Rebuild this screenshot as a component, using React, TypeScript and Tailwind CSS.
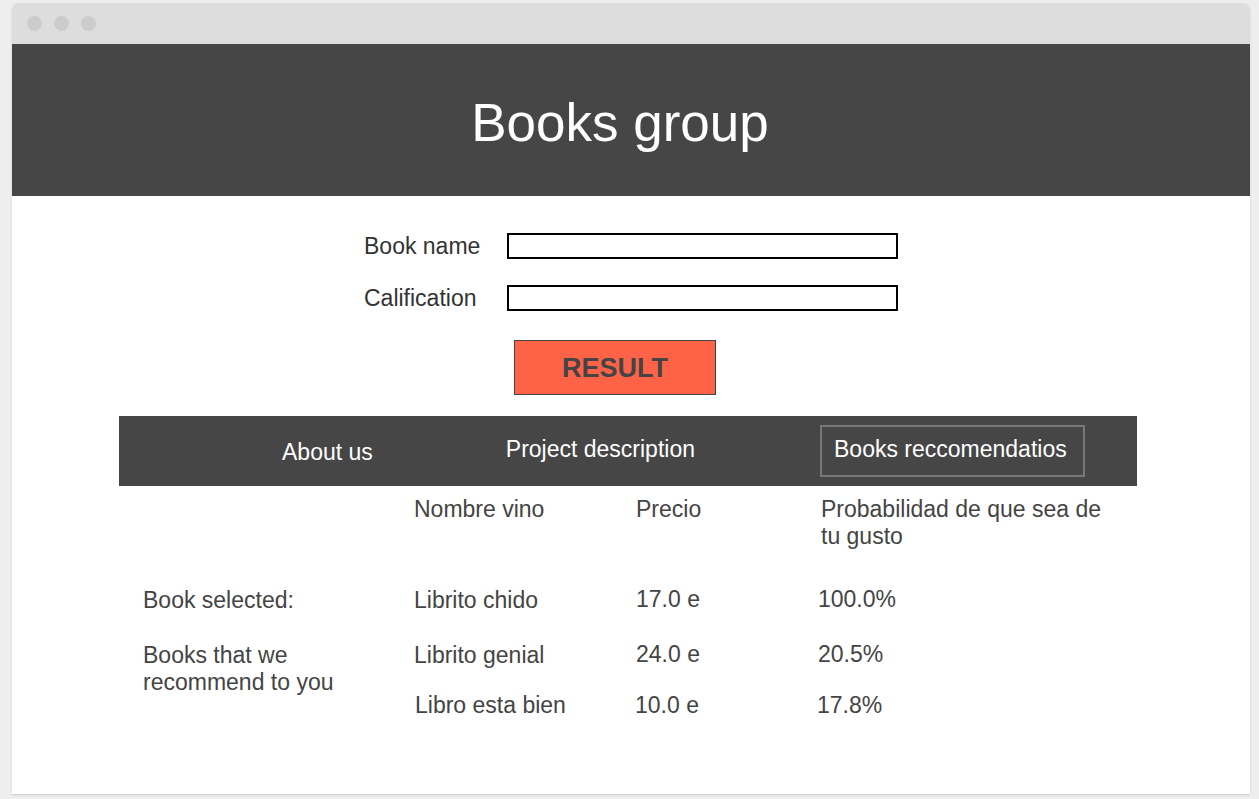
import React from "react";

const rows = [
  { name: "Librito chido", price: "17.0 e", prob: "100.0%" },
  { name: "Librito genial", price: "24.0 e", prob: "20.5%" },
  { name: "Libro esta bien", price: "10.0 e", prob: "17.8%" },
];

export default function App() {
  return (
    <div className="min-h-[799px] bg-[#eeeeee] pt-[3px] font-['Liberation_Sans',Arial,sans-serif]">
      <div className="mx-[12px] h-[791px] w-[1238px] overflow-hidden rounded-t-[6px] bg-white shadow-[0_1px_2px_rgba(0,0,0,0.15)]">
        {/* Title bar */}
        <div className="flex h-[41px] items-center gap-[12px] bg-[#dddddd] pl-[15px]">
          <span className="h-[15px] w-[15px] rounded-full bg-[#cccccc]" />
          <span className="h-[15px] w-[15px] rounded-full bg-[#cccccc]" />
          <span className="h-[15px] w-[15px] rounded-full bg-[#cccccc]" />
        </div>

        {/* Header */}
        <header className="flex h-[152px] items-center justify-center bg-[#464646]">
          <h1 className="pr-[22px] pt-[4px] text-[53px] leading-none text-white">Books group</h1>
        </header>

        {/* Form */}
        <div className="mx-auto mt-[37px] w-[534px] text-[#333333]">
          <div className="flex items-center">
            <label className="w-[143px] text-[23px] leading-[26px]">Book name</label>
            <input className="h-[26px] w-[391px] border-2 border-black bg-white outline-none" />
          </div>
          <div className="mt-[26px] flex items-center">
            <label className="w-[143px] text-[23px] leading-[26px]">Calification</label>
            <input className="h-[26px] w-[391px] border-2 border-black bg-white outline-none" />
          </div>
          <button className="ml-[150px] mt-[29px] flex h-[55px] w-[202px] items-center justify-center border border-[#444444] bg-[#ff6347] pt-[1px] text-[27px] font-bold text-[#444444]">
            RESULT
          </button>
        </div>

        {/* Nav */}
        <nav className="ml-[107px] mt-[21px] flex h-[70px] w-[1018px] items-center bg-[#464646] pb-[4px] text-[23px] text-white">
          <span className="ml-[163px] mt-[6px]">About us</span>
          <span className="ml-[133px]">Project description</span>
          <span className="ml-[125px] mt-[4px] flex h-[52px] w-[265px] items-center border-2 border-[#777777] pb-[4px] pl-[12px]">
            Books reccomendatios
          </span>
        </nav>

        {/* Results table */}
        <div className="ml-[107px] grid w-[1018px] grid-cols-[295px_222px_185px_1fr] pl-[24px] pt-[9px] text-[23px] leading-[27px] text-[#444444]">
          <div />
          <div className="-ml-[24px] pt-[1px]">Nombre vino</div>
          <div className="-ml-[24px] pt-[1px]">Precio</div>
          <div className="-ml-[24px] pr-[26px] pt-[1px]">Probabilidad de que sea de tu gusto</div>

          <div className="mt-[36px] pt-[1px]">Book selected:</div>
          <div className="-ml-[24px] mt-[36px] pt-[1px]">{rows[0].name}</div>
          <div className="-ml-[24px] mt-[36px]">{rows[0].price}</div>
          <div className="-ml-[27px] mt-[36px]">{rows[0].prob}</div>

          <div className="row-span-2 mt-[27px] pt-[1px]">
            Books that we
            <br />
            recommend to you
          </div>
          <div className="-ml-[24px] mt-[27px] pt-[1px]">{rows[1].name}</div>
          <div className="-ml-[24px] mt-[27px]">{rows[1].price}</div>
          <div className="-ml-[27px] mt-[27px]">{rows[1].prob}</div>

          <div className="-ml-[23px] mt-[23px]">{rows[2].name}</div>
          <div className="-ml-[25px] mt-[23px]">{rows[2].price}</div>
          <div className="-ml-[28px] mt-[23px]">{rows[2].prob}</div>
        </div>
      </div>
    </div>
  );
}
